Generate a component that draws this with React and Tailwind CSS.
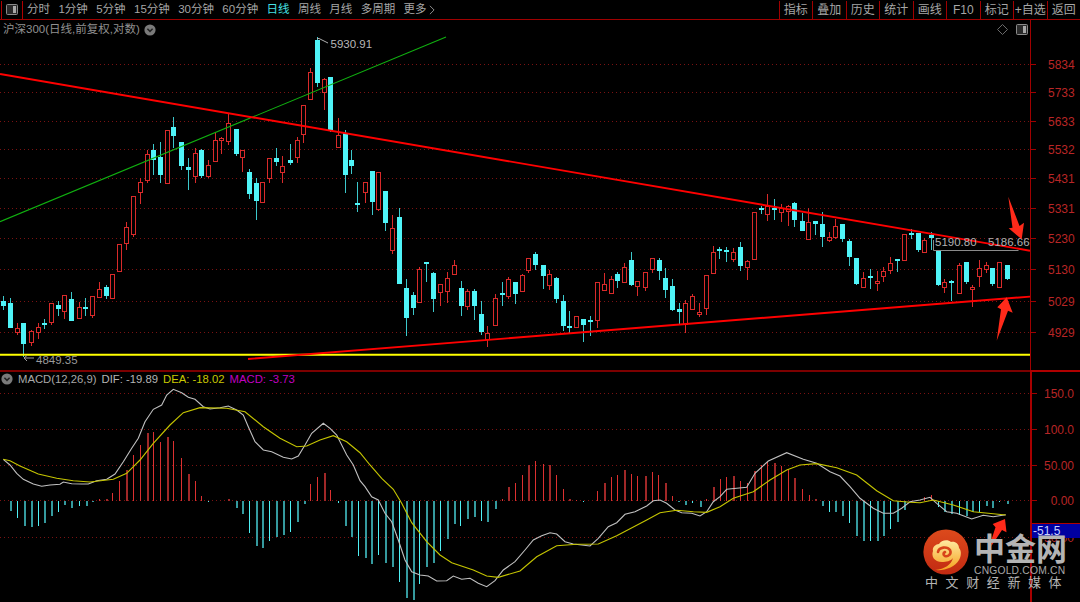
import React from "react";

const C = "c";
const R = "r";
// [u, high, top, bottom, low, kind] measured per crop, converted to page pixels below
const z3 = [[10,318,332,348,360,C],[30,325,338,412,412,C],[50,398,414,426,436,R],[70,398,398,462,500,C],[93,420,422,455,467,R],[113,400,412,426,448,R],[133,388,398,402,417,C],[153,338,340,398,406,R],[173,332,346,357,378,C],[193,315,316,365,386,R],[213,306,327,392,394,C],[236,335,352,385,388,R],[256,325,352,356,378,C],[277,318,319,375,384,R],[297,277,298,321,325,R],[317,285,292,318,326,C],[337,252,252,325,325,R],[357,162,163,245,245,R],[377,97,112,161,180,R],[400,18,18,132,140,R]];
const z1 = [[407,535,547,576,612,R],[426,450,463,540,548,R],[445,433,450,480,525,C],[465,425,470,525,550,C],[484,390,390,548,548,R],[503,350,380,408,445,C],[526,425,425,498,510,C],[546,475,500,510,570,C],[565,445,460,530,550,R],[585,448,450,528,535,C],[604,480,495,527,535,R],[623,395,420,482,482,R],[643,410,415,422,462,R],[662,342,368,422,435,R],[685,388,388,462,467,C],[704,450,450,470,515,R],[724,508,516,582,597,C],[743,535,548,603,660,C],[762,547,547,606,610,R],[782,475,475,535,550,R],[801,445,475,488,498,C],[820,468,497,515,550,R],[843,432,480,488,495,C],[862,410,420,470,490,R],[881,316,316,403,428,R],[901,205,217,298,298,R],[920,112,120,248,262,C],[940,235,238,278,330,R],[959,232,232,390,395,C],[982,353,405,440,440,R],[1001,390,400,527,580,C],[1020,450,480,498,522,C],[1038,546,610,613,636,C]];
const z4 = [[14,-25,-25,5,40,R],[35,-57,-57,35,75,C],[55,-54,-54,58,62,R],[74,2,2,98,122,C],[97,75,115,182,193,R],[118,55,82,282,282,C],[138,268,295,385,437,C],[158,307,315,353,375,C],[178,232,237,336,336,R],[198,215,215,218,277,C],[218,245,248,325,365,C],[241,283,283,308,348,R],[262,247,264,302,340,R],[281,210,226,254,254,R],[302,274,295,350,378,C],[322,296,304,350,360,R],[342,297,303,348,390,C],[362,333,372,427,435,C],[382,408,430,448,470,R],[405,312,324,405,405,R],[425,277,310,314,348,C],[445,260,268,320,328,R],[465,277,277,312,343,C],[485,252,255,302,302,R],[505,205,205,240,248,R],[526,187,191,225,240,C],[548,226,226,260,297,C],[568,240,252,285,300,R],[588,262,263,325,338,C],[608,315,332,408,423,C],[628,363,407,414,428,C],[649,377,379,411,415,R],[669,387,387,405,455,C],[689,378,390,393,438,C],[712,277,277,392,414,R],[732,248,281,300,302,R],[752,258,266,308,310,R],[772,247,252,274,294,C],[792,220,232,276,278,R],[813,187,211,286,288,C],[832,272,272,288,318,R],[856,246,246,290,303,R],[876,204,205,239,250,R],[896,205,211,243,270,C],[916,234,265,300,324,C],[936,268,289,362,362,C],[956,340,358,366,402,C],[976,330,338,402,430,R],[997,312,318,356,360,R],[1018,340,367,370,381,R],[1039,255,255,353,375,R],[1060,168,187,250,250,R],[1078,172,178,182,208,C]];
const z5 = [[18,170,180,185,216,C],[40,175,185,205,215,R],[60,157,172,230,242,C],[82,210,212,231,270,R],[103,65,65,205,205,R],[122,48,55,62,72,C],[142,12,48,72,92,R],[162,28,55,62,90,C],[183,42,55,68,95,R],[203,45,47,62,107,R],[223,35,40,90,110,C],[245,68,92,122,122,C],[265,55,97,147,150,R],[286,92,93,101,135,C],[307,65,102,142,170,C],[326,125,140,150,155,R],[346,88,108,142,148,R],[367,102,102,147,157,C],[387,148,153,202,227,C],[409,205,205,283,285,C],[430,245,263,290,292,R],[450,238,258,264,298,C],[470,242,272,275,302,R],[490,232,244,260,276,R],[511,200,220,242,252,R],[530,208,208,212,245,C],[553,132,132,210,210,R],[573,118,128,130,148,C],[593,128,128,180,187,C],[613,145,150,185,185,R],[633,125,135,145,180,C],[653,180,180,285,288,C],[673,268,276,290,310,R],[693,270,272,276,332,C],[716,218,226,311,311,R],[737,216,216,275,283,C],[757,285,292,298,350,R],[777,210,235,260,290,R],[797,215,226,238,250,R],[817,234,234,282,288,C],[838,217,217,291,291,R],[860,226,226,268,270,C]];

const conv = (rows, ox, oy, sx) =>
  rows.map(([u, h, t, b, l, k]) => ({ x: Math.round(ox + u / sx), h: oy + h / 3, t: oy + t / 3, b: oy + b / 3, l: oy + l / 3, k }));
const candles = [...conv(z3, 0, 190, 3), ...conv(z1, 0, 0, 2.904), ...conv(z4, 360, 190, 3), ...conv(z5, 720, 190, 3)];

const mk = (rows, ox) => rows.map(([u, v]) => ({ x: Math.round(ox + u / 3), y: Math.round(370 + v / 3) }));
const barsDown = [...mk([[30,423],[50,443],[71,468],[93,471],[114,468],[133,460],[153,437],[173,425],[193,405],[214,414],[237,408],[257,408],[277,397],[624,397],[707,414],[727,431],[747,489],[767,528],[787,535],[807,512],[828,500],[848,495],[871,485],[891,455],[911,402],[1014,400],[1035,469],[1054,502],[1075,557]], 0),
  ...mk([[14,563],[34,581],[55,555],[75,578],[97,590],[118,635],[138,683],[158,689],[178,641],[198,592],[219,578],[241,543],[261,507],[281,463],[301,467],[321,446],[341,440],[362,452],[382,455],[405,417],[669,397],[955,397],[976,405],[996,400],[1019,411]], 360),
  ...mk([[306,408],[326,425],[346,425],[367,437],[387,460],[409,497],[430,512],[450,512],[470,512],[490,497],[511,477],[530,457],[553,420],[653,412],[673,425],[693,433],[716,436],[737,437],[757,427],[777,425],[797,408],[817,414],[838,396],[860,401]], 720)];
const barsUp = [...mk([[297,386],[317,386],[337,369],[357,332],[377,300],[400,256],[420,225],[440,190],[460,187],[480,215],[501,202],[520,212],[544,265],[564,312],[584,334],[604,378],[684,386],[931,342],[951,320],[971,308],[991,360]], 0),
  ...mk([[425,388],[445,351],[465,339],[485,315],[505,285],[525,273],[548,282],[568,285],[588,314],[608,357],[628,386],[648,390],[712,363],[732,339],[752,322],[772,314],[792,300],[812,311],[832,317],[855,317],[875,306],[895,314],[915,339],[936,377],[1039,388],[1059,351],[1079,328]], 360),
  ...mk([[18,322],[39,318],[60,334],[82,340],[103,303],[123,285],[142,277],[162,278],[183,288],[203,297],[223,325],[246,357],[266,375],[286,388],[613,380],[633,375]], 720)];

const pts = (rows, ox) => rows.map(([u, v]) => `${(ox + u / 3).toFixed(1)},${(370 + v / 3).toFixed(1)}`).join(" ");
const dif = [pts([[10,268],[30,285],[50,310],[70,328],[100,342],[125,349],[150,345],[180,343],[190,336],[215,341],[245,342],[265,342],[290,332],[320,328],[345,312],[370,275],[395,235],[415,205],[435,155],[460,118],[485,105],[500,75],[520,58],[545,68],[565,82],[585,88],[610,110],[630,117],[660,113],[685,108],[710,120],[730,135],[745,170],[765,215],[790,240],[815,245],[850,262],[875,267],[895,258],[915,225],[935,190],[970,160],[990,175],[1010,195],[1040,255],[1060,285],[1080,332]],0),
  pts([[15,350],[35,380],[55,390],[75,430],[95,455],[115,510],[135,570],[155,605],[180,615],[205,618],[230,633],[260,632],[280,618],[305,628],[330,625],[355,640],[380,650],[405,632],[430,600],[465,575],[495,540],[520,510],[545,497],[570,488],[590,492],[615,515],[640,522],[690,528],[715,505],[745,470],[770,458],[795,433],[825,425],[860,408],[880,392],[900,390],[920,400],[945,420],[965,428],[995,430],[1020,438],[1040,425],[1060,395],[1080,380]],360),
  pts([[20,358],[50,355],[80,352],[105,310],[145,273],[200,248],[250,268],[290,280],[330,305],[360,318],[390,350],[420,385],[460,415],[490,430],[520,430],[545,415],[570,395],[600,390],[630,382],[650,400],[680,425],[710,430],[755,447],[790,436],[820,440],[857,434]],720)].join(" ");
const dea = [pts([[10,268],[30,272],[60,288],[115,312],[170,325],[220,332],[270,336],[340,328],[380,310],[420,270],[460,220],[510,165],[550,128],[600,113],[680,115],[735,125],[790,170],[840,205],[890,230],[920,228],[960,210],[1000,197],[1040,215],[1080,248]],0),
  pts([[30,285],[65,325],[100,358],[125,400],[155,458],[200,515],[240,555],[275,578],[340,600],[380,618],[415,622],[480,603],[530,560],[590,527],[650,523],[715,522],[770,497],[860,450],[900,428],[950,421],[1000,425],[1040,427],[1080,410]],360),
  pts([[40,385],[100,365],[150,330],[200,300],[240,285],[290,281],[350,293],[410,315],[470,362],[520,392],[570,397],[600,398],[640,390],[700,405],[760,425],[857,435]],720)].join(" ");

const priceTicks = [[5834,64.5],[5733,92.5],[5633,121.5],[5532,149.5],[5431,178.5],[5331,208.5],[5230,238.5],[5130,269.5],[5029,301.5],[4929,332.5]];
const macdTicks = [["150.0",393.5],["100.0",429.5],["50.00",465.5],["0.00",500.5],["-50.00",537.5]];

const left = [["分时",0],["1分钟",0],["5分钟",0],["15分钟",0],["30分钟",0],["60分钟",0],["日线",1],["周线",0],["月线",0],["多周期",0],["更多",0]];
const right = ["指标","叠加","历史","统计","画线","F10","标记","+自选","返回"];
const SANS = "font-['Liberation_Sans','Noto_Sans_CJK_SC',sans-serif]";

function Chevron({ className }) {
  return (
    <svg viewBox="0 0 12 12" className={className}>
      <circle cx="6" cy="6" r="5.6" fill="#7a7a7a" />
      <path d="M3.4 4.8 6 7.4 8.6 4.8" fill="none" stroke="#222" strokeWidth="1.5" />
    </svg>
  );
}

function PanelIcon({ className }) {
  return (
    <svg viewBox="0 0 12 11" className={className}>
      <rect x=".5" y=".5" width="11" height="10" rx="1" fill="#2a2a2a" stroke="#8a8a8a" />
      <rect x="7" y="2" width="3" height="7" fill="#a8a8a8" />
    </svg>
  );
}

function Candle({ c }) {
  const wx = c.x + 0.5;
  const up = c.k === R;
  const col = up ? "#d92a2a" : "#4ff4f8";
  const wick = up ? "#d92a2a" : "#3cc8cc";
  return (
    <g shapeRendering="crispEdges">
      <line x1={wx} x2={wx} y1={c.h} y2={c.l} stroke={wick} />
      {up ? (
        <rect x={c.x - 2 + 0.5} y={Math.round(c.t) + 0.5} width={4} height={Math.max(2, Math.round(c.b - c.t))} fill="#000" stroke={col} />
      ) : (
        <rect x={c.x - 2} y={Math.round(c.t)} width={5} height={Math.max(2, Math.round(c.b - c.t))} fill={col} />
      )}
    </g>
  );
}

function Upper() {
  return (
    <svg viewBox="0 20 1030 350" className="w-full h-full block">
      {priceTicks.map(([, y]) => (
        <line key={y} x1="0" x2="1030" y1={y} y2={y} stroke="#7a1212" strokeDasharray="1 3" shapeRendering="crispEdges" />
      ))}
      {candles.map((c, i) => <Candle key={i} c={c} />)}
      <line x1="0" y1="221.7" x2="446" y2="37" stroke="#10b010" strokeWidth="1.1" />
      <line x1="0" y1="74" x2="1030" y2="250.7" stroke="#ff0000" strokeWidth="1.9" />
      <line x1="0" x2="1030" y1="354.8" y2="354.8" stroke="#ffff00" strokeWidth="1.9" />
      <line x1="248" y1="359" x2="1030" y2="296.6" stroke="#ff0000" strokeWidth="1.9" />
      <path d="M317 38.5h2l9 4.5" fill="none" stroke="#b0b0b0" />
      <text x="330.5" y="48" fontSize="11.5" fill="#b8b8b8" fontFamily="Liberation Sans">5930.91</text>
      <path d="M24 358h10M24 358l3-2.5M24 358l3 3" fill="none" stroke="#a0a0a0" />
      <text x="36" y="364" fontSize="11.5" fill="#9a9a9a" fontFamily="Liberation Sans">4849.35</text>
      <path d="M933.5 240v10.5h85" fill="none" stroke="#8a8a8a" />
      <text x="935" y="246" fontSize="11.5" fill="#b0b0b0" fontFamily="Liberation Sans">5190.80</text>
      <text x="988" y="246" fontSize="11.5" fill="#b0b0b0" fontFamily="Liberation Sans">5186.66</text>
      <polygon points="1008.3,196.7 1019.5,226 1024,222.7 1021.7,239.3 1008.7,228.3 1012.5,227.7" fill="#ff2a1a" />
      <polygon points="996.7,340.7 1001,309.3 997.3,307.3 1006.7,297.3 1012.7,312.7 1008,310.7" fill="#ff2a1a" />
    </svg>
  );
}

function Lower() {
  return (
    <svg viewBox="0 372 1030 230" className="w-full h-full block">
      {macdTicks.map(([, y]) => (
        <line key={y} x1="0" x2="1030" y1={y} y2={y} stroke="#7a1212" strokeDasharray="1 3" shapeRendering="crispEdges" />
      ))}
      <g shapeRendering="crispEdges">
        {barsUp.map((b, i) => <rect key={i} x={b.x} y={b.y} width={i % 3 === 1 ? 2 : 1} height={501 - b.y} fill={i % 3 === 1 ? "#a02828" : "#dc3030"} />)}
        {barsDown.map((b, i) => <rect key={i} x={b.x} y={501} width={i % 3 === 1 ? 1 : 2} height={b.y - 501} fill={i % 3 === 1 ? "#4ff0f4" : "#359a9e"} />)}
      </g>
      <polyline points={dif} fill="none" stroke="#c0c0c0" strokeWidth="1.1" />
      <polyline points={dea} fill="none" stroke="#c4c400" strokeWidth="1.15" />
      <polygon points="987.5,551.7 995.5,527.3 992.7,524 1005,519 1006.5,532.3 1002,530" fill="#ff2a1a" />
    </svg>
  );
}

function PriceAxis() {
  return (
    <svg viewBox="1031 20 49 350" className="w-full h-full block">
      <g shapeRendering="crispEdges">
        {priceTicks.map(([, y]) => <line key={y} x1="1031" x2="1036" y1={y} y2={y} stroke="#a00000" />)}
      </g>
      {priceTicks.map(([p, y]) => (
        <text key={p} x="1048" y={y + 4.5} fontSize="12" fill="#b82626" fontFamily="Liberation Sans">{p}</text>
      ))}
    </svg>
  );
}

function MacdAxis() {
  return (
    <svg viewBox="1032 372 48 230" className="w-full h-full block">
      <g shapeRendering="crispEdges">
        {macdTicks.map(([, y]) => <line key={y} x1="1032" x2="1037" y1={y} y2={y} stroke="#a00000" />)}
      </g>
      {macdTicks.map(([t, y]) => (
        <text key={t} x="1074" y={y + 4.5} textAnchor="end" fontSize="12" fill="#b82626" fontFamily="Liberation Sans">{t}</text>
      ))}
    </svg>
  );
}

function Logo({ className }) {
  return (
    <svg viewBox="0 0 46 46" className={className}>
      <defs>
        <linearGradient id="lg" x1="0" y1="0" x2="0" y2="1">
          <stop offset="0" stopColor="#dc4a1c" />
          <stop offset="1" stopColor="#c22a12" />
        </linearGradient>
        <linearGradient id="sw" x1="0" y1="0" x2="0" y2="1">
          <stop offset="0" stopColor="#ffe9a0" />
          <stop offset="1" stopColor="#f5a21f" />
        </linearGradient>
      </defs>
      <circle cx="23" cy="23" r="22.6" fill="url(#lg)" />
      <path d="M12 41C22 40 28 36 30 29 28 32 23 33 19 33 11 33 8 27 10 22 9 18 13 15 16 15 18 11 25 10 28 13 32 12 36 15 36 19 39 22 38 28 36 31 32 38 22 42 12 41Z" fill="url(#sw)" />
      <path d="M15 23C16 18 24 17 27 21 29 25 25 28 22 27 20 26 20 24 22 23" fill="none" stroke="#d8431a" strokeWidth="2.6" strokeLinecap="round" />
    </svg>
  );
}

export default function App() {
  return (
    <div className={`relative w-[1080px] h-[602px] bg-black flex flex-col overflow-hidden ${SANS}`}>
      <header className="h-5 shrink-0 flex items-stretch justify-between border-b border-[#a00000] text-[12px] leading-none text-[#a6a6a6]">
        <div className="flex items-center">
          <div className="ml-px w-[22px] h-[18px] border-x border-[#b00000] flex items-center justify-center">
            <PanelIcon className="w-3 h-[11px]" />
          </div>
          <nav className="ml-1 flex items-center gap-[8.4px] text-[11.5px]">
            {left.map(([t, on]) => (
              <span key={t} className={on ? "text-[#46e0e4]" : ""}>{t}</span>
            ))}
            <svg viewBox="0 0 7 12" className="w-[6px] h-[10px] -ml-[6px]">
              <path d="M1 1l5 5-5 5" fill="none" stroke="#a6a6a6" />
            </svg>
          </nav>
        </div>
        <div className="flex items-stretch pt-px">
          {right.map((t) => (
            <span key={t} className="w-[33.5px] border-l border-[#a00000] flex items-center justify-center">{t}</span>
          ))}
        </div>
      </header>

      <main className="flex-1 flex min-h-0">
        <div className="w-[1030px] shrink-0 flex flex-col">
          <section className="relative h-[350px]">
            <Upper />
            <div className="absolute left-[3px] top-[2px] flex items-center gap-[4px] text-[11.5px] leading-[15px] text-[#909090]">
              <span>沪深300(日线,前复权,对数)</span>
              <Chevron className="w-3 h-3" />
            </div>
            <div className="absolute right-[2px] top-[4px] flex items-center gap-[8px]">
              <svg viewBox="0 0 11 11" className="w-[11px] h-[11px]">
                <path d="M5.5.5l5 5-5 5-5-5z" fill="none" stroke="#6a6a6a" />
              </svg>
              <PanelIcon className="w-3 h-[11px]" />
            </div>
          </section>
          <div className="h-0.5 shrink-0 bg-[#7c0000]" />
          <section className="relative flex-1 min-h-0">
            <Lower />
            <div className="absolute left-px top-0 flex items-center text-[11.3px] leading-[14px] whitespace-nowrap">
              <Chevron className="w-3 h-3" />
              <span className="ml-[5px] text-[#a8a8a8]">MACD(12,26,9)</span>
              <span className="ml-[5px] text-[#b4b4b4]">DIF: -19.89</span>
              <span className="ml-[5px] text-[#c8c800]">DEA: -18.02</span>
              <span className="ml-[5px] text-[#c000c0]">MACD: -3.73</span>
            </div>
          </section>
        </div>
        <aside className="flex-1 flex flex-col">
          <div className="h-[350px] border-l border-[#a00000]"><PriceAxis /></div>
          <div className="h-0.5 shrink-0 bg-[#b00000]" />
          <div className="relative flex-1 min-h-0 border-l-2 border-[#a80000]">
            <MacdAxis />
            <div className="absolute left-0 right-0 top-[151px] h-[15px] bg-[#0000a0] border-t border-[#b00000] text-[12px] leading-[14px] text-[#c8d0ff] pl-px">-51.5</div>
          </div>
        </aside>
      </main>

      <div className="absolute left-[923px] top-[529px]">
        <div className="flex items-start">
          <Logo className="w-[46px] h-[46px]" />
          <div className="ml-[5px] flex flex-col">
            <span className="font-['Noto_Sans_CJK_SC',sans-serif] font-bold text-[31px] leading-[36px] text-[#b4b4b4] whitespace-nowrap">中金网</span>
            <span className="text-[10.3px] leading-[11px] tracking-[0.2px] text-[#a8a8a8] whitespace-nowrap">CNGOLD.COM.CN</span>
          </div>
        </div>
        <div className="ml-[2px] text-[13px] leading-[14px] tracking-[7.6px] text-[#b4b4b4] whitespace-nowrap">中文财经新媒体</div>
      </div>
    </div>
  );
}
